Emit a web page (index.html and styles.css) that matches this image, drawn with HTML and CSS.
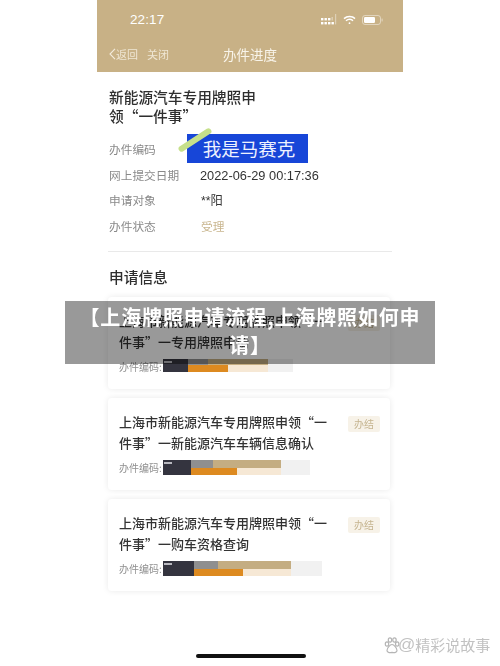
FILE: index.html
```html
<!DOCTYPE html>
<html lang="en">
<head>
  <meta charset="UTF-8">
  <meta name="viewport" content="width=device-width, initial-scale=1.0">
  <title>上海牌照申请流程</title>
  <link rel="stylesheet" href="styles.css">
</head>
<body>
  <div class="phone">
    <header class="top">
      <div class="status">
        <span class="time">22:17</span>
        <div class="status-icons">
          <svg width="16" height="11" viewBox="0 0 16 11" fill="#fff">
            <rect x="0" y="4" width="2.4" height="2.4"/><rect x="3.5" y="4" width="2.4" height="2.4"/><rect x="7" y="4" width="2.4" height="2.4"/>
            <rect x="0" y="8" width="2.4" height="2.4"/><rect x="3.5" y="8" width="2.4" height="2.4"/><rect x="7" y="8" width="2.4" height="2.4"/><rect x="10.5" y="8" width="2.4" height="2.4"/>
            <rect x="10.5" y="3" width="1.4" height="3.5" opacity=".4"/><rect x="14" y="0" width="1.2" height="10.4" opacity=".4"/>
          </svg>
          <svg width="13" height="10" viewBox="0 0 13 10" fill="none" stroke="#fff" stroke-width="1.5">
            <path d="M1 3.6C4.2.7 8.8.7 12 3.6"/><path d="M3 5.8c2-1.700 5-1.700 7 0"/><circle cx="6.500" cy="8.200" r=".9" fill="#fff" stroke="none"/>
          </svg>
          <svg width="21" height="10" viewBox="0 0 21 10">
            <rect x=".5" y=".5" width="18" height="9" rx="2.500" fill="none" stroke="#fff" stroke-opacity=".45"/>
            <rect x="2" y="2" width="11" height="6" rx="1.200" fill="#fff"/>
            <rect x="19.600" y="3.600" width="1" height="2.800" fill="#fff" fill-opacity=".5"/>
          </svg>
        </div>
      </div>
      <nav class="nav">
        <div class="nav-left">
          <svg width="7" height="12" viewBox="0 0 7 12" fill="none" stroke="#f3ecdd" stroke-width="1.1"><path d="M6 .8 1 6l5 5.200"/></svg>
          <span class="nav-back">返回</span>
          <span>关闭</span>
        </div>
        <span class="nav-title">办件进度</span>
      </nav>
    </header>

    <main class="content">
      <h1 class="title">新能源汽车专用牌照申<br>领“一件事”</h1>
      <div class="rows">
        <div class="row">
          <span class="label">办件编码</span>
          <span class="mask">我是马赛克<i class="mask-stroke"></i></span>
        </div>
        <div class="row">
          <span class="label">网上提交日期</span>
          <span class="value date">2022-06-29 00:17:36</span>
        </div>
        <div class="row">
          <span class="label">申请对象</span>
          <span class="value">**阳</span>
        </div>
        <div class="row">
          <span class="label">办件状态</span>
          <span class="value accepted">受理</span>
        </div>
      </div>
      <hr class="divider">
      <h2 class="section-title">申请信息</h2>

      <div class="cards">
        <article class="card">
          <div class="card-head">
            <p class="card-title">上海市新能源汽车专用牌照申领“一件事”一专用牌照申请</p>
            <span class="tag">办结</span>
          </div>
          <div class="code">
            <span class="code-label">办件编码:</span>
            <div class="redact redact-1">
              <b class="r-dark"></b><b class="r-grey"></b><b class="r-tan"></b><b class="r-orange"></b><b class="r-peach"></b><b class="r-light"></b>
            </div>
          </div>
        </article>
        <article class="card">
          <div class="card-head">
            <p class="card-title">上海市新能源汽车专用牌照申领“一件事”一新能源汽车车辆信息确认</p>
            <span class="tag">办结</span>
          </div>
          <div class="code">
            <span class="code-label">办件编码:</span>
            <div class="redact redact-2">
              <b class="r-dark"></b><b class="r-grey"></b><b class="r-tan"></b><b class="r-orange"></b><b class="r-peach"></b><b class="r-light"></b>
            </div>
          </div>
        </article>
        <article class="card">
          <div class="card-head">
            <p class="card-title">上海市新能源汽车专用牌照申领“一件事”一购车资格查询</p>
            <span class="tag">办结</span>
          </div>
          <div class="code">
            <span class="code-label">办件编码:</span>
            <div class="redact redact-3">
              <b class="r-dark"></b><b class="r-grey"></b><b class="r-tan"></b><b class="r-orange"></b><b class="r-peach"></b><b class="r-light"></b>
            </div>
          </div>
        </article>
      </div>
      <div class="home-bar"></div>
    </main>
  </div>

  <div class="banner">【上海牌照申请流程,上海牌照如何申请】</div>

  <div class="watermark">
    <svg width="16" height="17" viewBox="0 0 16 17" fill="none" stroke="#b5b5b5" stroke-width="1.2">
      <ellipse cx="3" cy="7" rx="1.700" ry="2.200"/><ellipse cx="6" cy="3" rx="1.700" ry="2.200"/><ellipse cx="10.500" cy="3" rx="1.700" ry="2.200"/><ellipse cx="13.200" cy="7" rx="1.700" ry="2.200"/>
      <path d="M8 7.500c-2 0-5 3.500-5 6 0 2 2.500 2.500 5 1.800 2.500.7 5 .2 5-1.800 0-2.500-3-6-5-6z"/>
    </svg>
    <span class="wm-at">@</span>
    <span>精彩说故事</span>
  </div>
</body>
</html>
```

FILE: styles.css
```css
body {
  margin: 0;
  width: 500px;
  height: 666px;
  overflow: hidden;
  position: relative;
  background: #fff;
  font-family: "Noto Sans CJK SC", "Liberation Sans", sans-serif;
  color: #2e2e2e;
}
.phone {
  width: 306px;
  margin: 0 auto;
  filter: blur(0.45px);
}
.top {
  background: #c8b186;
  height: 72px;
  color: #fff;
}
.status {
  height: 37px;
  display: flex;
  justify-content: space-between;
  align-items: center;
  padding: 2px 20px 0 33px;
  box-sizing: border-box;
}
.time {
  font-family: "Liberation Sans", sans-serif;
  font-size: 13.5px;
  letter-spacing: 0.1px;
  color: #fff;
}
.status-icons {
  display: flex;
  align-items: center;
  gap: 6px;
}
.nav {
  height: 33px;
  display: flex;
  align-items: center;
  justify-content: center;
  position: relative;
}
.nav-left {
  position: absolute;
  left: 12px;
  top: 0;
  bottom: 0;
  display: flex;
  align-items: center;
  font-size: 11px;
  color: #efe6d4;
}
.nav-back {
  margin: 0 9px 0 0;
}
.nav-title {
  font-size: 13.5px;
  color: #f8f4ea;
}
.content {
  padding: 15px 11px 0 12px;
}
.title {
  margin: 0;
  font-size: 14.7px;
  line-height: 19px;
  font-weight: 500;
  height: 38px;
}
.rows {
  margin-top: 11px;
}
.row {
  display: flex;
  align-items: center;
  height: 25.5px;
  font-size: 11.7px;
}
.label {
  width: 92px;
  color: #8a8a8a;
}
.value {
  color: #333;
  font-family: "Liberation Sans", "Noto Sans CJK SC", sans-serif;
  font-size: 12.3px;
}
.date {
  font-size: 12.8px;
  margin-left: -1px;
  padding-top: 3px;
}
.accepted {
  color: #c9b68f;
  font-size: 11.7px;
}
.mask {
  position: relative;
  margin: 0 0 0 -14px;
  width: 121px;
  height: 29px;
  background: #1746d8;
  color: #eef2ff;
  font-size: 18.5px;
  line-height: 29px;
  text-align: center;
  padding-left: 3px;
  box-sizing: border-box;
  white-space: nowrap;
}
.mask-stroke {
  position: absolute;
  left: -11px;
  top: 3px;
  width: 38px;
  height: 6px;
  border-radius: 3px;
  background: #c6e08a;
  transform: rotate(-33deg);
}
.divider {
  border: 0;
  height: 1px;
  background: #e9e9e9;
  margin: 13px 0 0 -1px;
}
.section-title {
  margin: 15px 0 0;
  font-size: 14.7px;
  line-height: 20px;
  font-weight: 500;
}
.cards {
  margin: 10px 2px 0 -1px;
  display: flex;
  flex-direction: column;
  gap: 9px;
}
.card {
  height: 92px;
  box-sizing: border-box;
  padding: 14px 10px 0 11px;
  background: #fff;
  border-radius: 4px;
  box-shadow: 0 0 6px rgba(0, 0, 0, 0.09);
}
.card-head {
  display: flex;
  justify-content: space-between;
  align-items: flex-start;
}
.card-title {
  margin: 0;
  width: 212px;
  font-size: 13px;
  line-height: 20.5px;
  font-weight: 500;
  color: #333;
}
.tag {
  margin-top: 4px;
  width: 32px;
  height: 16px;
  background: #f7f2e8;
  border-radius: 2px;
  color: #c5b48f;
  font-size: 10px;
  line-height: 16px;
  text-align: center;
}
.code {
  display: flex;
  align-items: center;
  margin-top: 7px;
  height: 15px;
}
.code-label {
  font-size: 10px;
  color: #8f8f8f;
  width: 44px;
  white-space: nowrap;
}
.redact {
  display: grid;
  grid-template-rows: 1fr 1fr;
  height: 100%;
}
.redact-1 { grid-template-columns: 25px 20px 20px 40px 25px; height: 13px; margin-top: -3px; }
.redact-2 { grid-template-columns: 28px 22px 24px 44px 29px; }
.redact-3 { grid-template-columns: 31px 24px 25px 48px 31px; }
.r-dark { background: #34343f; grid-row: 1 / 3; grid-column: 1; }
.r-dark::before {
  content: "";
  display: block;
  width: 8px;
  height: 2px;
  margin: 2px 0 0 1px;
  background: #b9b9c0;
}
.r-grey { background: #8f8f8f; grid-row: 1; grid-column: 2; }
.r-tan { background: #c4ad82; grid-row: 1; grid-column: 3 / 5; }
.r-orange { background: #dd8a20; grid-row: 2; grid-column: 2 / 4; }
.r-peach { background: #f6e8d5; grid-row: 2; grid-column: 4; }
.r-light { background: #f1f1f1; grid-row: 1 / 3; grid-column: 5; }
.home-bar {
  width: 110px;
  height: 4px;
  border-radius: 2px;
  background: #111;
  margin: 63px auto 0;
}
.banner {
  position: absolute;
  left: 65px;
  top: 301px;
  width: 370px;
  height: 63px;
  box-sizing: border-box;
  padding: 2px 10px 0;
  background: rgba(0, 0, 0, 0.4);
  color: #fff;
  font-size: 20px;
  font-weight: 700;
  line-height: 28px;
  letter-spacing: 0.85px;
  text-align: center;
}
.watermark {
  position: absolute;
  left: 384px;
  top: 636px;
  display: flex;
  align-items: center;
  color: #c2c2c2;
  font-size: 15px;
  line-height: 18px;
  white-space: nowrap;
  filter: blur(0.7px);
}
.wm-at {
  font-family: "Liberation Sans", sans-serif;
  font-size: 17px;
  margin-left: -2px;
}
```
